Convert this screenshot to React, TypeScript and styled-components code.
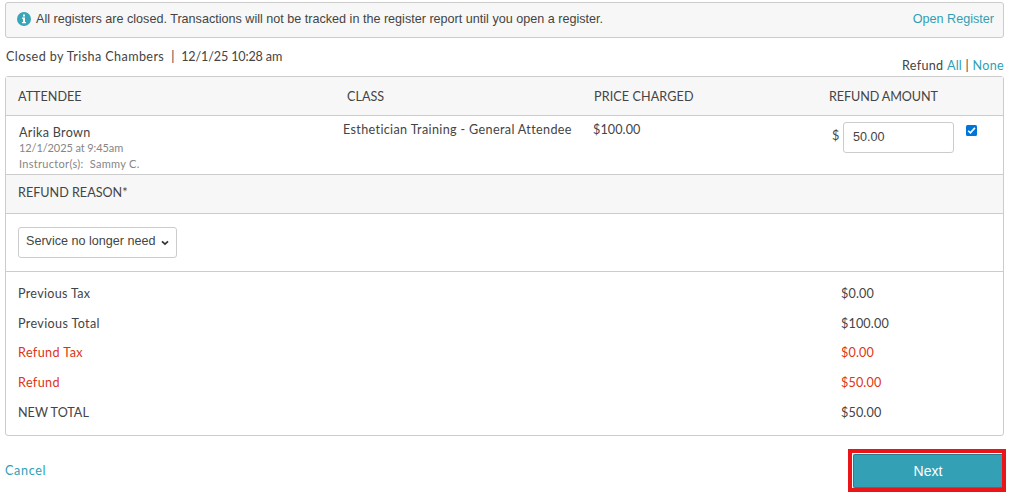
import * as React from "react";
import styled, { createGlobalStyle } from "styled-components";

const colors = {
  text: "#444444",
  muted: "#868686",
  link: "#2f9fb5",
  danger: "#dd3416",
  border: "#cccccc",
  band: "#f7f7f7"
};

const GlobalStyle = createGlobalStyle`
  * {
    box-sizing: border-box;
  }

  body {
    margin: 0;
    background: #ffffff;
    color: ${colors.text};
    font-family: Lato, "Noto Sans", sans-serif;
    font-size: 12.6px;
    line-height: 16px;
  }
`;

const Page = styled.main`
  width: 1017px;
  height: 499px;
  padding: 2px 0 0 5px;
  overflow: hidden;
`;

const Content = styled.div`
  width: 999px;
`;

// `$spacing` is the letter spacing in px
const Text = styled.span<{ $spacing?: number }>`
  white-space: pre;
  letter-spacing: ${p => p.$spacing || 0}px;
`;

const Link = styled.a<{ $spacing?: number }>`
  color: ${colors.link};
  text-decoration: none;
  white-space: pre;
  cursor: pointer;
  letter-spacing: ${p => p.$spacing || 0}px;
`;

const Notice = styled.div`
  display: flex;
  align-items: center;
  height: 36px;
  padding: 0 9px 3px 11px;
  border: 1px solid ${colors.border};
  border-radius: 3px;
  background: ${colors.band};
  font-family: "Liberation Sans", Arial, sans-serif;
`;

const InfoIcon = styled.svg`
  flex: none;
  width: 14px;
  height: 14px;
  margin: 1px 5px 0 0;
`;

const NoticeText = styled(Text)`
  flex: 1;
`;

const Meta = styled.div`
  display: flex;
  justify-content: space-between;
  height: 38px;
  padding: 11px 0 0 1px;
`;

const ClosedBy = styled.div`
  display: flex;
`;

const Divider = styled.span`
  width: 17px;
  text-align: center;
`;

const RefundLinks = styled.div`
  padding-top: 9px;
`;

const Panel = styled.section`
  height: 360px;
  border: 1px solid ${colors.border};
  border-radius: 3px;
`;

const Columns = styled.div`
  display: grid;
  grid-template-columns: 325px 250px 239px 1fr;
`;

const HeaderRow = styled(Columns)`
  align-items: center;
  height: 39px;
  padding: 1px 0 0 12px;
  border-bottom: 1px solid ${colors.border};
  background: ${colors.band};

  > :nth-child(2) {
    padding-left: 4px;
  }

  > :nth-child(3) {
    padding-left: 1px;
  }

  > :nth-child(4) {
    margin-left: -3px;
  }
`;

const AttendeeRow = styled(Columns)`
  height: 59px;
  padding: 6px 0 0 12px;
  border-bottom: 1px solid ${colors.border};
`;

const Attendee = styled.div`
  display: flex;
  flex-direction: column;
  padding: 3px 0 0 1px;
`;

const AttendeeName = styled(Text)`
  height: 15px;
`;

const Detail = styled(Text)`
  color: ${colors.muted};
  font-size: 11px;
`;

const Amount = styled.div`
  display: flex;
  align-items: flex-start;
`;

const Currency = styled(Text)`
  width: 11px;
  padding-top: 6px;
`;

const AmountInput = styled.input`
  width: 111px;
  height: 31px;
  padding: 0 9px 2px;
  border: 1px solid ${colors.border};
  border-radius: 3px;
  color: ${colors.text};
  font: 12.6px "Liberation Sans", Arial, sans-serif;
`;

const Checkbox = styled.svg`
  width: 11px;
  height: 11px;
  margin: 3px 0 0 12px;
`;

const Band = styled.div`
  display: flex;
  align-items: center;
  height: 39px;
  padding: 0 12px 3px;
  border-bottom: 1px solid ${colors.border};
  background: ${colors.band};
`;

const ReasonRow = styled.div`
  height: 58px;
  padding: 13px 12px;
  border-bottom: 1px solid ${colors.border};
`;

const Select = styled.button`
  display: flex;
  align-items: center;
  justify-content: space-between;
  width: 159px;
  height: 31px;
  padding: 0 7px 3px;
  border: 1px solid ${colors.border};
  border-radius: 3px;
  background: #ffffff;
  color: ${colors.text};
  font: 12.6px "Liberation Sans", Arial, sans-serif;
`;

const Chevron = styled.svg`
  width: 8px;
  height: 6px;
  margin-top: 4px;
`;

const Totals = styled.div`
  padding: 7px 12px 0;
`;

const TotalRow = styled.div<{ $danger?: boolean }>`
  display: grid;
  grid-template-columns: 823px 1fr;
  align-items: center;
  height: 29.75px;
  color: ${p => (p.$danger ? colors.danger : colors.text)};
`;

const Footer = styled.footer`
  display: flex;
  align-items: flex-start;
  justify-content: space-between;
  width: 1001px;
  padding-top: 13px;
`;

const CancelLink = styled(Link)`
  padding-top: 14px;
`;

const NextFrame = styled.div`
  width: 158px;
  height: 43px;
  padding: 1px 0 0 1px;
  border: 4px solid #ea1519;
  background: #ffffff;
`;

const NextButton = styled.button`
  display: block;
  width: 149px;
  height: 34px;
  padding: 0;
  border: 1px solid #277e8e;
  border-right: 0;
  border-radius: 2px 0 0 2px;
  background: #34a0b5;
  color: #ffffff;
  font: 14px "Liberation Sans", Arial, sans-serif;
`;

interface ITotal {
  label: string;
  value: string;
  danger?: boolean;
  spacing?: number;
}

const totals: ITotal[] = [
  { label: "Previous Tax", value: "$0.00", spacing: 0.3 },
  { label: "Previous Total", value: "$100.00", spacing: 0.35 },
  { label: "Refund Tax", value: "$0.00", danger: true, spacing: 0.4 },
  { label: "Refund", value: "$50.00", danger: true, spacing: 0.4 },
  { label: "NEW TOTAL", value: "$50.00" }
];

export default function App() {
  const [amount, setAmount] = React.useState("50.00");

  return (
    <Page>
      <GlobalStyle />
      <Content>
        <Notice>
          <InfoIcon viewBox="0 0 14 14">
            <circle cx="7" cy="7" r="7" fill="#39a5b9" />
            <path
              d="M6 2.5h2v2H6zM5 5.5h3v4.5h1v1.2H5V10h1V6.7H5z"
              fill="#ffffff"
            />
          </InfoIcon>
          <NoticeText>
            All registers are closed. Transactions will not be tracked in the
            register report until you open a register.
          </NoticeText>
          <Link>Open Register</Link>
        </Notice>
        <Meta>
          <ClosedBy>
            <Text $spacing={0.4}>Closed by Trisha Chambers</Text>
            <Divider>|</Divider>
            <Text $spacing={-0.15}>12/1/25 10:28 am</Text>
          </ClosedBy>
          <RefundLinks>
            <Text $spacing={0.3}>Refund </Text>
            <Link $spacing={0.2}>All</Link>
            <Text $spacing={0.3}> | </Text>
            <Link $spacing={0.3}>None</Link>
          </RefundLinks>
        </Meta>
        <Panel>
          <HeaderRow>
            <Text>ATTENDEE</Text>
            <Text>CLASS</Text>
            <Text $spacing={0.1}>PRICE CHARGED</Text>
            <Text $spacing={-0.1}>REFUND AMOUNT</Text>
          </HeaderRow>
          <AttendeeRow>
            <Attendee>
              <AttendeeName $spacing={0.3}>Arika Brown</AttendeeName>
              <Detail $spacing={-0.1}>12/1/2025 at 9:45am</Detail>
              <Detail $spacing={0.3}>{"Instructor(s):  Sammy C."}</Detail>
            </Attendee>
            <Text $spacing={0.35}>Esthetician Training - General Attendee</Text>
            <Text $spacing={0.1}>$100.00</Text>
            <Amount>
              <Currency>$</Currency>
              <AmountInput
                value={amount}
                onChange={e => setAmount(e.target.value)}
              />
              <Checkbox viewBox="0 0 11 11">
                <rect width="11" height="11" rx="1.5" fill="#0075d8" />
                <path
                  d="M2.2 5.7l2.2 2.2 4.5-5"
                  fill="none"
                  stroke="#ffffff"
                  strokeWidth="1.6"
                />
              </Checkbox>
            </Amount>
          </AttendeeRow>
          <Band>
            <Text>REFUND REASON*</Text>
          </Band>
          <ReasonRow>
            <Select>
              <Text>Service no longer need</Text>
              <Chevron viewBox="0 0 8 6">
                <path
                  d="M1 1.3l3 2.8 3-2.8"
                  fill="none"
                  stroke="#333333"
                  strokeWidth="1.7"
                />
              </Chevron>
            </Select>
          </ReasonRow>
          <Totals>
            {totals.map(({ label, value, danger, spacing }) => (
              <TotalRow key={label} $danger={danger}>
                <Text $spacing={spacing}>{label}</Text>
                <Text $spacing={0.15}>{value}</Text>
              </TotalRow>
            ))}
          </Totals>
        </Panel>
        <Footer>
          <CancelLink $spacing={0.65}>Cancel</CancelLink>
          <NextFrame>
            <NextButton>Next</NextButton>
          </NextFrame>
        </Footer>
      </Content>
    </Page>
  );
}
